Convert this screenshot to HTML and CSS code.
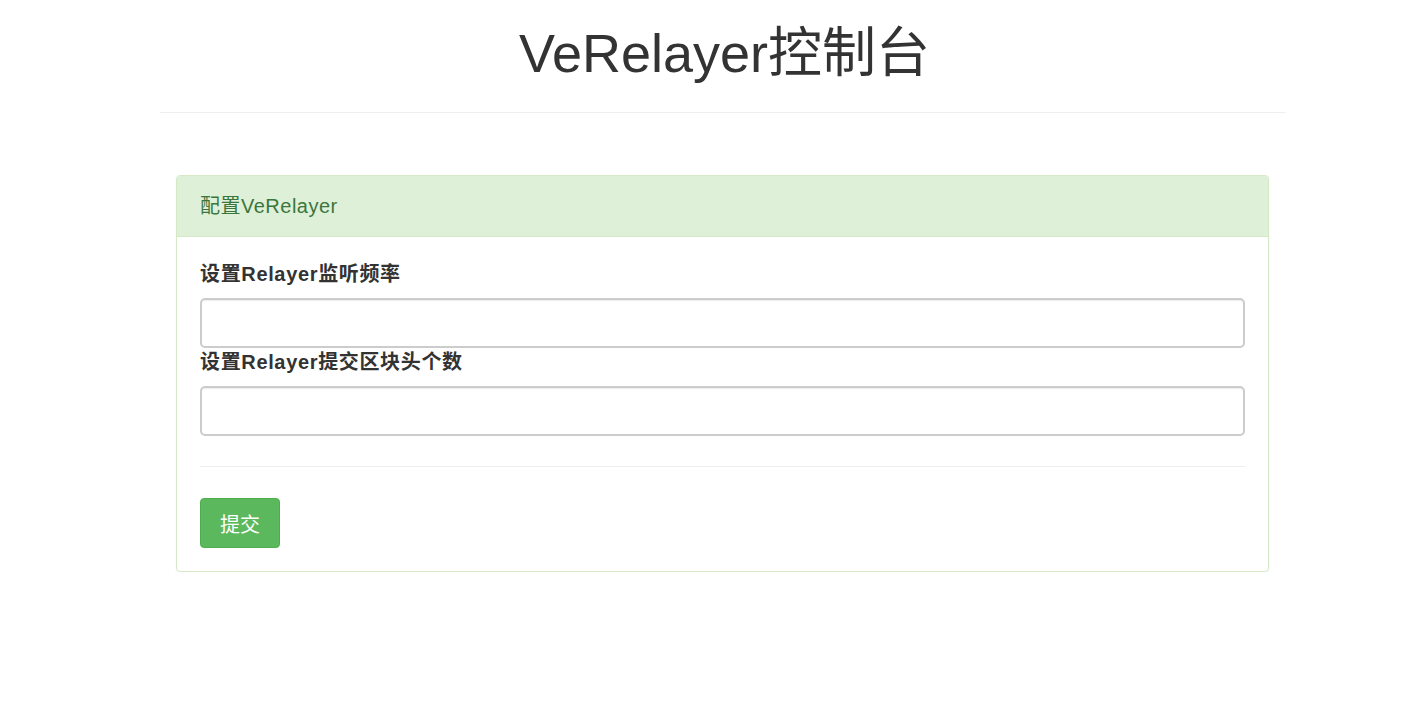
FILE: index.html
```html
<!DOCTYPE html>
<html lang="zh-CN">
<head>
<meta charset="utf-8">
<title>VeRelayer控制台</title>
<link rel="stylesheet" href="styles.css">
</head>
<body>
<div class="page">
  <header class="page-header">
    <h1 class="title">VeRelayer控制台</h1>
  </header>
  <div class="panel">
    <div class="panel-heading">配置VeRelayer</div>
    <form class="panel-body">
      <label class="field-label" for="freq">设置Relayer监听频率</label>
      <input class="field-input" id="freq" type="text">
      <label class="field-label" for="count">设置Relayer提交区块头个数</label>
      <input class="field-input" id="count" type="text">
      <hr class="divider">
      <button class="btn-submit" type="button">提交</button>
    </form>
  </div>
</div>
</body>
</html>
```

FILE: styles.css
```css
html, body {
  margin: 0;
  padding: 0;
  background: #fff;
}
body {
  font-family: "Liberation Sans", Arial, "Noto Sans CJK SC", sans-serif;
  color: #333;
}
.page {
  width: 1125px;
  margin-left: 160px;
}
.page-header {
  height: 112px;
  border-bottom: 1px solid #eee;
  display: flex;
  justify-content: center;
}
.title {
  margin: 0 0 0 4px;
  padding-top: 22px;
  font-size: 54px;
  font-weight: normal;
  line-height: 62px;
  color: #333;
}
.panel {
  margin: 62px 16px 0;
  border: 1px solid #d6e9c6;
  border-radius: 4px;
  box-shadow: 0 1px 2px rgba(0,0,0,0.06);
}
.panel-heading {
  height: 60px;
  line-height: 60px;
  padding: 0 23px;
  background: #dff0d8;
  color: #3c763d;
  border-bottom: 1px solid #d6e9c6;
  border-radius: 3px 3px 0 0;
  font-size: 20px;
  letter-spacing: 0.5px;
}
.panel-body {
  padding: 23px;
  display: flex;
  flex-direction: column;
  align-items: flex-start;
}
.field-label {
  font-size: 20px;
  font-weight: bold;
  line-height: 28px;
  margin-bottom: 10px;
  letter-spacing: 0.65px;
  color: #333;
}
.field-input {
  box-sizing: border-box;
  width: 100%;
  height: 50px;
  margin: 0;
  border: 2px solid #ccc;
  border-radius: 5px;
  box-shadow: inset 0 1px 1px rgba(0,0,0,0.075);
  font-size: 20px;
  padding: 6px 12px;
}
.divider {
  width: 100%;
  margin: 30px 0 31px;
  border: 0;
  border-top: 1px solid #eee;
}
.btn-submit {
  height: 50px;
  padding: 0 19px;
  background: #5cb85c;
  border: 1px solid #4cae4c;
  border-radius: 4px;
  color: #fff;
  font-size: 20px;
  font-family: "Liberation Sans", Arial, "Noto Sans CJK SC", sans-serif;
  cursor: pointer;
}
```
